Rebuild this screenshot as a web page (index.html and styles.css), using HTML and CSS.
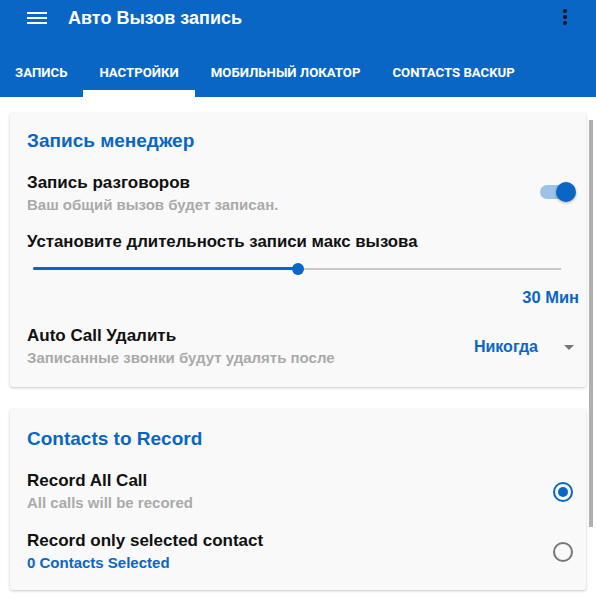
FILE: index.html
```html
<!DOCTYPE html>
<html lang="ru">
<head>
    <meta charset="UTF-8">
    <meta name="viewport" content="width=device-width, initial-scale=1.0">
    <title>Авто Вызов запись</title>
    <link rel="stylesheet" href="styles.css">
</head>
<body>
    <div class="appbar">
        <div class="toolbar">
            <svg class="menu-icon" width="20" height="14" viewBox="0 0 20 14">
                <rect x="0" y="1" width="20" height="2" fill="#fff"/>
                <rect x="0" y="6" width="20" height="2" fill="#fff"/>
                <rect x="0" y="11" width="20" height="2" fill="#fff"/>
            </svg>
            <h1 class="app-title">Авто Вызов запись</h1>
            <svg class="more-icon" width="6" height="18" viewBox="0 0 6 18">
                <circle cx="3" cy="3" r="2" fill="#111"/>
                <circle cx="3" cy="9" r="2" fill="#111"/>
                <circle cx="3" cy="15" r="2" fill="#111"/>
            </svg>
        </div>
        <ul class="tabs">
            <li class="tab">ЗАПИСЬ</li>
            <li class="tab active">НАСТРОЙКИ</li>
            <li class="tab">МОБИЛЬНЫЙ ЛОКАТОР</li>
            <li class="tab">CONTACTS BACKUP</li>
        </ul>
    </div>

    <div class="content">
        <!-- Recording manager -->
        <div class="card card-first">
            <h2 class="card-title">Запись менеджер</h2>

            <div class="row row-first">
                <div class="row-text">
                    <div class="row-title">Запись разговоров</div>
                    <div class="row-sub">Ваш общий вызов будет записан.</div>
                </div>
                <div class="switch">
                    <div class="switch-track"></div>
                    <div class="switch-thumb"></div>
                </div>
            </div>

            <div class="slider-label">Установите длительность записи макс вызова</div>
            <div class="slider">
                <div class="slider-rail"></div>
                <div class="slider-fill" style="width: 50.2%"></div>
                <div class="slider-thumb" style="left: 50.2%"></div>
            </div>
            <div class="slider-value">30 Мин</div>

            <div class="row row-delete">
                <div class="row-text">
                    <div class="row-title">Auto Call Удалить</div>
                    <div class="row-sub">Записанные звонки будут удалять после</div>
                </div>
                <div class="dropdown">
                    <span class="dropdown-value">Никогда</span>
                    <span class="dropdown-arrow"></span>
                </div>
            </div>
        </div>

        <!-- Contacts to record -->
        <div class="card card-second">
            <h2 class="card-title">Contacts to Record</h2>

            <div class="row row-first">
                <div class="row-text">
                    <div class="row-title">Record All Call</div>
                    <div class="row-sub">All calls will be recored</div>
                </div>
                <div class="radio checked"></div>
            </div>

            <div class="row row-second">
                <div class="row-text">
                    <div class="row-title">Record only selected contact</div>
                    <div class="row-sub blue">0 Contacts Selected</div>
                </div>
                <div class="radio"></div>
            </div>
        </div>
    </div>

    <div class="scrollbar"></div>
</body>
</html>
```

FILE: styles.css
```css
body {
    margin: 0;
    width: 596px;
    height: 600px;
    overflow: hidden;
    position: relative;
    background: #fff;
    font-family: "Liberation Sans", Arial, sans-serif;
    font-weight: 700;
}

/* App bar */
.appbar {
    background: #0a66c4;
    color: #fff;
}
.toolbar {
    height: 49px;
    display: flex;
    align-items: flex-start;
    padding: 7px 28px 0 27px;
    box-sizing: border-box;
}
.menu-icon {
    margin-top: 4px;
}
.app-title {
    margin: 0 0 0 21px;
    font-size: 18px;
    line-height: 22px;
    flex: 1;
}
.more-icon {
    margin-top: 1px;
}
.tabs {
    list-style: none;
    margin: 0;
    padding: 0;
    display: flex;
    height: 48px;
}
.tab {
    padding: 0 16px;
    font-family: Roboto, sans-serif;
    font-size: 13.2px;
    line-height: 48px;
    position: relative;
}
.tab:first-child {
    padding-left: 15px;
}
.tab.active::after {
    content: "";
    position: absolute;
    left: 0;
    right: 0;
    bottom: 0;
    height: 7px;
    background: #fff;
}

/* Cards */
.content {
    padding: 0 10px;
}
.card {
    background: #f9f9f9;
    border-radius: 3px;
    box-shadow: 0 1px 3px rgba(0, 0, 0, 0.22);
    padding: 16px 9px 18px 17px;
}
.card-first {
    margin-top: 16px;
}
.card-second {
    margin-top: 22px;
    padding-top: 18px;
    padding-bottom: 16px;
}
.card-title {
    margin: 0;
    font-size: 19px;
    line-height: 24px;
    color: #0a66c4;
}

.row {
    display: flex;
    align-items: center;
}
.row-text {
    flex: 1;
}
.row-first {
    margin-top: 19px;
}
.row-second {
    margin-top: 16px;
}
.row-delete {
    margin-top: 18px;
}
.row-title {
    font-size: 17px;
    line-height: 22px;
    color: #111;
}
.row-sub {
    font-size: 15px;
    line-height: 22px;
    color: #aaa;
}
.row-sub.blue {
    color: #0a66c4;
}

/* Switch */
.switch {
    position: relative;
    width: 36px;
    height: 20px;
    margin: -4px 1px 0 0;
}
.switch-track {
    position: absolute;
    left: 0;
    top: 3px;
    width: 34px;
    height: 14px;
    border-radius: 7px;
    background: #9fc2e8;
}
.switch-thumb {
    position: absolute;
    right: 0;
    top: 0;
    width: 20px;
    height: 20px;
    border-radius: 50%;
    background: #0a66c4;
    box-shadow: 0 1px 3px rgba(0, 0, 0, 0.3);
}

/* Slider */
.slider-label {
    margin-top: 15px;
    font-size: 16.8px;
    line-height: 22px;
    color: #111;
}
.slider {
    position: relative;
    height: 20px;
    margin: 6px 16px 0 6px;
}
.slider-rail {
    position: absolute;
    left: 0;
    right: 0;
    top: 9px;
    height: 2px;
    background: #c8c8c8;
}
.slider-fill {
    position: absolute;
    left: 0;
    top: 8px;
    height: 3px;
    background: #0a66c4;
    border-radius: 2px;
}
.slider-thumb {
    position: absolute;
    top: 4px;
    width: 12px;
    height: 12px;
    margin-left: -6px;
    border-radius: 50%;
    background: #0a66c4;
}
.slider-value {
    margin: 8px -2px 0 0;
    text-align: right;
    font-size: 16.5px;
    line-height: 20px;
    color: #0a66c4;
}

/* Dropdown */
.dropdown {
    display: flex;
    align-items: center;
    margin-right: 3px;
}
.dropdown-value {
    font-size: 16px;
    color: #0a66c4;
}
.dropdown-arrow {
    margin-left: 26px;
    width: 0;
    height: 0;
    border-left: 5px solid transparent;
    border-right: 5px solid transparent;
    border-top: 5px solid #777;
}

/* Radio buttons */
.radio {
    width: 20px;
    height: 20px;
    box-sizing: border-box;
    border: 2px solid #777;
    border-radius: 50%;
    margin-right: 4px;
    position: relative;
}
.radio.checked {
    border-color: #0a66c4;
}
.radio.checked::after {
    content: "";
    position: absolute;
    left: 3px;
    top: 3px;
    width: 10px;
    height: 10px;
    border-radius: 50%;
    background: #0a66c4;
}

/* Overlay scroll indicator */
.scrollbar {
    position: absolute;
    left: 589px;
    top: 120px;
    width: 4px;
    height: 407px;
    background: #b0b0b0;
}
```
